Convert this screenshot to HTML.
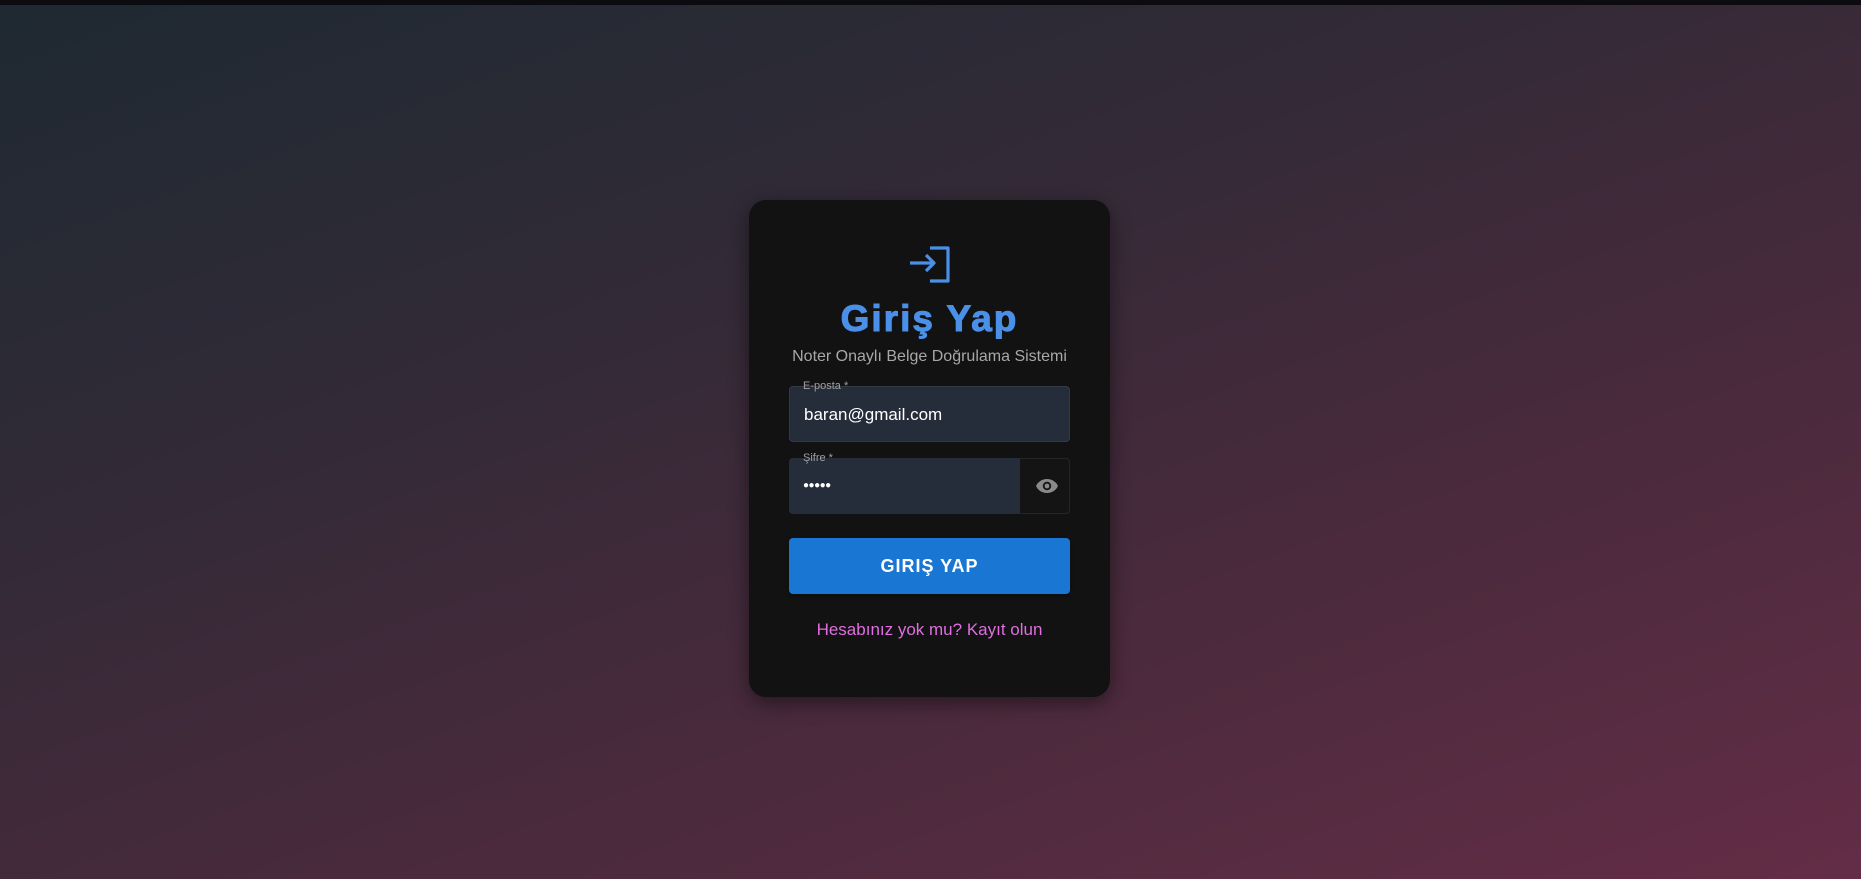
<!DOCTYPE html>
<html><head><meta charset="utf-8"><style>
*{box-sizing:border-box;margin:0;padding:0}
html,body{width:1861px;height:879px;overflow:hidden}
body{font-family:"Liberation Sans",Arial,sans-serif;background:linear-gradient(160deg,#1e2932 0%,#2f2a36 30%,#492a3c 65%,#632d46 100%);position:relative}
.top{position:absolute;left:0;top:0;width:100%;height:5px;background:#0b0b10}
.card{position:absolute;left:749px;top:200px;width:361px;height:497px;background:#121212;border-radius:17px;box-shadow:0 6px 20px rgba(0,0,0,.45)}
.icon{position:absolute;left:161px;top:46px}
h1{position:absolute;left:0;width:100%;top:98px;text-align:center;color:#4a90e8;font-size:37px;font-weight:bold;letter-spacing:2px;-webkit-text-stroke:1px #4a90e8}
.sub{position:absolute;left:0;width:100%;top:148px;text-align:center;color:#a8a8a8;font-size:16px}
.field{position:absolute;left:40px;width:281px;height:56px;background:#262d3a;border:1px solid #333a46;border-radius:4px}
.lab{position:absolute;left:54px;font-size:11px;color:#a0a0a0;background:transparent}
.val{position:absolute;left:14px;top:18px;color:#fff;font-size:17px}
.btn{position:absolute;left:40px;top:338px;width:281px;height:56px;background:#1976d2;border-radius:4px;color:#fff;font-weight:bold;font-size:18px;text-align:center;line-height:56px;letter-spacing:1px;box-shadow:0 2px 4px rgba(0,0,0,.3)}
.link{position:absolute;left:0;width:100%;top:420px;text-align:center;color:#df6ee0;font-size:17px}
</style></head><body>
<div class="top"></div>
<div class="card">
<svg class="icon" width="42" height="38" viewBox="0 0 42 38"><g fill="none" stroke="#4a90e8" stroke-width="3.2" stroke-linejoin="round"><path d="M0 17H24M16 9L24 17L16 25"/><path d="M20 2H38V35H20"/></g></svg>
<h1>Giriş Yap</h1>
<div class="sub">Noter Onaylı Belge Doğrulama Sistemi</div>
<div class="field" style="top:186px"><div class="val">baran@gmail.com</div></div>
<div class="lab" style="top:180px">E-posta *</div>
<div class="field" style="top:258px;background:#141414;border-color:#262626"></div>
<div class="field" style="top:258px;width:231px;border:none;border-radius:4px 0 0 4px"><div class="val" style="font-size:10px;top:22px;letter-spacing:-0.5px">●●●●●</div></div>
<div class="lab" style="top:252px">Şifre *</div>
<svg style="position:absolute;left:286px;top:278px" width="24" height="16" viewBox="0 0 24 16"><path d="M12 1C6.5 1 2.5 4.5 1 8c1.5 3.5 5.5 7 11 7s9.5-3.5 11-7C21.5 4.5 17.5 1 12 1z" fill="#8a8a8a"/><circle cx="12" cy="8" r="4.2" fill="#141414"/><circle cx="12" cy="8" r="2.4" fill="#8a8a8a"/></svg>
<div class="btn">GIRIŞ YAP</div>
<div class="link">Hesabınız yok mu? Kayıt olun</div>
</div>
</body></html>
